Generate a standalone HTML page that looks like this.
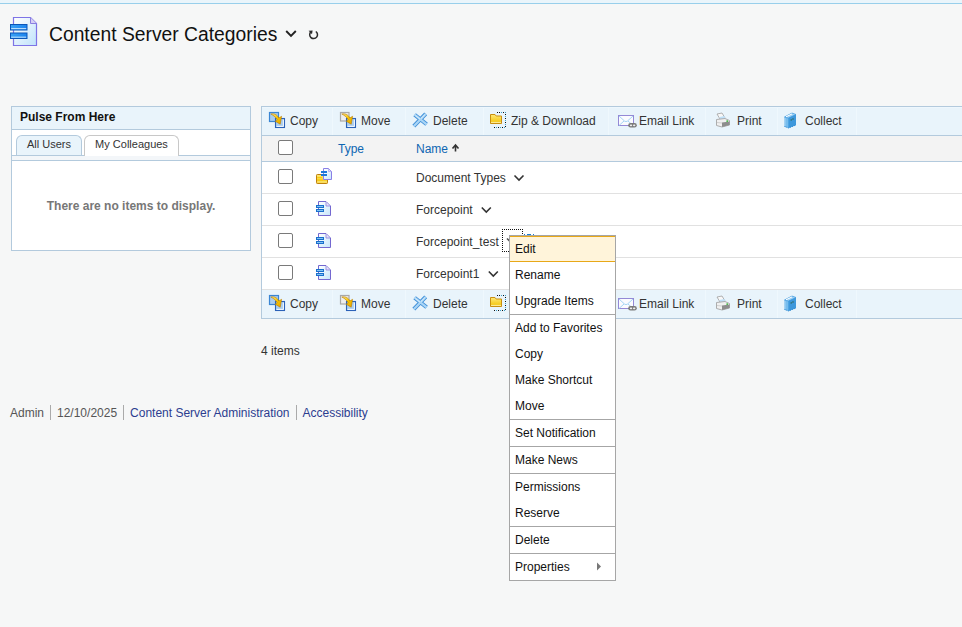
<!DOCTYPE html>
<html><head><meta charset="utf-8">
<style>
*{box-sizing:border-box;margin:0;padding:0}
html,body{width:962px;height:627px;overflow:hidden;background:#f6f7f7;font-family:"Liberation Sans",sans-serif;color:#333;}
.a{position:absolute}
svg{position:absolute;overflow:visible}
#topband{left:0;top:0;width:962px;height:3px;background:#eaf5fb}
#topline{left:0;top:3px;width:962px;height:1px;background:#98cfeb}
#title{left:49px;top:24px;font-size:19.3px;color:#111;white-space:nowrap;line-height:22px}
/* pulse */
#pulse{left:11px;top:106px;width:240px;height:145px;border:1px solid #b3cadd;background:#fff}
#pulsehd{left:0;top:0;width:238px;height:23px;background:#e9f4fb;border-bottom:1px solid #b3cadd}
#pulsehd span{position:absolute;left:8px;top:3px;font-size:12px;font-weight:bold;color:#111}
.tab{position:absolute;top:28px;height:21px;border:1px solid #b3cadd;border-bottom:none;border-radius:6px 6px 0 0;font-size:11px;color:#333;text-align:center;line-height:17px}
#tabstrip{left:0;top:48px;width:238px;height:6px;background:#f3f6f9;border-top:1px solid #b3cadd;border-bottom:1px solid #b3cadd}
#noitems{left:0;top:92px;width:238px;text-align:center;font-size:12px;font-weight:bold;color:#777}
/* table */
.t{font-size:12px;color:#333;white-space:nowrap;line-height:14px}
.hline{height:1px}
.cb{position:absolute;width:15px;height:15px;border:1px solid #7a7a7a;border-radius:2px;background:#fff}
#footer{left:10px;top:405px;font-size:12px;color:#555;white-space:nowrap}
#footer a{color:#2c3d8f;text-decoration:none}
.sep{display:inline-block;width:1px;height:15px;background:#aaa;vertical-align:-3px;margin:0 6px}
/* menu */
#menu{left:509px;top:235px;width:107px;height:346px;background:#fff;border:1px solid #a6a6a6}
.mi{position:absolute;left:5px;font-size:12px;color:#111;white-space:nowrap;line-height:14px}
.ms{position:absolute;left:0;width:105px;height:1px;background:#a6a6a6}
</style></head><body>
<div class="a" id="topband"></div>
<div class="a" id="topline"></div>

<!-- header icon -->
<svg style="left:0;top:0" width="962" height="60">
 <defs>
  <linearGradient id="pg" x1="0" y1="0" x2="1" y2="1"><stop offset="0" stop-color="#ffffff"/><stop offset="1" stop-color="#bfe3fb"/></linearGradient>
  <linearGradient id="bar" x1="0" y1="0" x2="1" y2="0"><stop offset="0" stop-color="#3aa0f5"/><stop offset="1" stop-color="#1a84ee"/></linearGradient>
 </defs>
 <path d="M13.5 17.5 H30.5 L36.5 23.5 V45.5 H13.5 Z" fill="url(#pg)" stroke="#7e74e6" stroke-width="1.2"/>
 <path d="M30.5 17.5 V23.5 H36.5" fill="#d6d0f5" stroke="#8a7fe0" stroke-width="1"/>
 <rect x="10.5" y="24.5" width="16.5" height="5.5" fill="url(#bar)" stroke="#0a56b8" stroke-width="1"/>
 <rect x="11.2" y="28.2" width="15" height="0.9" fill="#d8eeff"/>
 <rect x="10.5" y="33" width="16.5" height="5.5" fill="url(#bar)" stroke="#0a56b8" stroke-width="1"/>
 <rect x="11.2" y="36.7" width="15" height="0.9" fill="#d8eeff"/>
 <path d="M286.2 31 L291 35.8 L295.8 31" fill="none" stroke="#222" stroke-width="1.9"/>
 <path d="M315.8 31.5 A3.9 3.9 0 1 1 310.9 31.9" fill="none" stroke="#2a2a2a" stroke-width="1.5"/>
 <path d="M308.6 30.8 L312.6 30.5 L312 34.2 Z" fill="#2a2a2a"/>
</svg>

<div class="a" id="title">Content Server Categories</div>

<div class="a" id="pulse">
 <div class="a" id="pulsehd"><span>Pulse From Here</span></div>
 <div class="tab" style="left:4px;width:66px;background:#e9f4fb">All Users</div>
 <div class="tab" style="left:72px;width:95px;background:#fff;height:21px;z-index:2;border-color:#c8c8c8">My Colleagues</div>
 <div class="a" id="tabstrip"></div>
 <div class="a" id="noitems">There are no items to display.</div>
</div>

<!-- table -->
<div class="a" style="left:261px;top:106px;width:701px;height:213px;background:#fff;border-left:1px solid #b3cadd"></div>
<div class="a hline" style="left:261px;top:106px;width:701px;background:#b3cadd"></div>
<div class="a" style="left:262px;top:107px;width:700px;height:28px;background:#e9f4fb"></div>
<div class="a hline" style="left:261px;top:135px;width:701px;background:#b3cadd"></div>
<div class="a" style="left:262px;top:136px;width:700px;height:25px;background:#f3f3f3"></div>
<div class="a hline" style="left:261px;top:161px;width:701px;background:#b3cadd"></div>
<div class="a hline" style="left:262px;top:193px;width:700px;background:#e1e1e1"></div>
<div class="a hline" style="left:262px;top:225px;width:700px;background:#e1e1e1"></div>
<div class="a hline" style="left:262px;top:257px;width:700px;background:#e1e1e1"></div>
<div class="a hline" style="left:262px;top:289px;width:700px;background:#e1e1e1"></div>
<div class="a" style="left:262px;top:290px;width:700px;height:28px;background:#e9f4fb"></div>
<div class="a hline" style="left:261px;top:318px;width:701px;background:#b3cadd"></div>

<div class="a" style="left:332px;top:107px;width:1px;height:28px;background:#eff8fd"></div>
<div class="a" style="left:405px;top:107px;width:1px;height:28px;background:#eff8fd"></div>
<div class="a" style="left:483px;top:107px;width:1px;height:28px;background:#eff8fd"></div>
<div class="a" style="left:608px;top:107px;width:1px;height:28px;background:#eff8fd"></div>
<div class="a" style="left:705px;top:107px;width:1px;height:28px;background:#eff8fd"></div>
<div class="a" style="left:777px;top:107px;width:1px;height:28px;background:#eff8fd"></div>
<div class="a" style="left:856px;top:107px;width:1px;height:28px;background:#eff8fd"></div>
<div class="a" style="left:262px;top:107px;width:700px;height:1px;background:#eef7fd"></div>
<div class="a" style="left:332px;top:290px;width:1px;height:28px;background:#eff8fd"></div>
<div class="a" style="left:405px;top:290px;width:1px;height:28px;background:#eff8fd"></div>
<div class="a" style="left:483px;top:290px;width:1px;height:28px;background:#eff8fd"></div>
<div class="a" style="left:608px;top:290px;width:1px;height:28px;background:#eff8fd"></div>
<div class="a" style="left:705px;top:290px;width:1px;height:28px;background:#eff8fd"></div>
<div class="a" style="left:777px;top:290px;width:1px;height:28px;background:#eff8fd"></div>
<div class="a" style="left:856px;top:290px;width:1px;height:28px;background:#eff8fd"></div>
<div class="cb" style="left:278px;top:140px"></div>
<div class="cb" style="left:278px;top:169px"></div>
<div class="cb" style="left:278px;top:201px"></div>
<div class="cb" style="left:278px;top:233px"></div>
<div class="cb" style="left:278px;top:265px"></div>

<div class="a t" style="left:338px;top:142px;color:#0e66b2">Type</div>
<div class="a t" style="left:416px;top:142px;color:#0e66b2">Name</div>
<div class="a t" style="left:416px;top:171px">Document Types</div>
<div class="a t" style="left:416px;top:203px">Forcepoint</div>
<div class="a t" style="left:416px;top:235px">Forcepoint_test</div>
<div class="a t" style="left:416px;top:267px">Forcepoint1</div>


<div class="a t" style="left:290px;top:114px">Copy</div>
<div class="a t" style="left:361px;top:114px">Move</div>
<div class="a t" style="left:433px;top:114px">Delete</div>
<div class="a t" style="left:511px;top:114px">Zip &amp; Download</div>
<div class="a t" style="left:639px;top:114px">Email Link</div>
<div class="a t" style="left:737px;top:114px">Print</div>
<div class="a t" style="left:805px;top:114px">Collect</div>
<div class="a t" style="left:290px;top:297px">Copy</div>
<div class="a t" style="left:361px;top:297px">Move</div>
<div class="a t" style="left:433px;top:297px">Delete</div>
<div class="a t" style="left:511px;top:297px">Zip &amp; Download</div>
<div class="a t" style="left:639px;top:297px">Email Link</div>
<div class="a t" style="left:737px;top:297px">Print</div>
<div class="a t" style="left:805px;top:297px">Collect</div>

<svg style="left:0;top:0" width="962" height="627">
 <defs>
  <linearGradient id="ylw" x1="0" y1="0" x2="1" y2="1"><stop offset="0" stop-color="#ffe98a"/><stop offset="0.5" stop-color="#f6c400"/><stop offset="1" stop-color="#e3a100"/></linearGradient>
  <linearGradient id="fld" x1="0" y1="0" x2="0" y2="1"><stop offset="0" stop-color="#ffe97a"/><stop offset="1" stop-color="#f2c200"/></linearGradient>
  <linearGradient id="xg" x1="0" y1="0" x2="1" y2="1"><stop offset="0" stop-color="#bfe3fa"/><stop offset="1" stop-color="#5aa8e6"/></linearGradient>
  <g id="icopy">
   <rect x="0.5" y="0.5" width="9" height="9" fill="#a9cdef" stroke="#3a85d3" stroke-width="1.2"/>
   <rect x="6.5" y="6.5" width="9" height="9" fill="#a9cdef" stroke="#2b62b8" stroke-width="1.1"/><path d="M7.6 14.4 H14.4 V7.6" fill="none" stroke="#ffffff" stroke-width="0.9"/>
   <path d="M1.8 2 C5.5 1.2 8.5 3 9.8 6 L12.6 4.3 L11.2 12.2 L6.2 9.2 L8.2 7.9 C7 5.5 5 3.6 1.8 2 Z" fill="url(#ylw)" stroke="#b87a00" stroke-width="0.6"/>
  </g>
  <g id="imove">
   <rect x="0.5" y="0.5" width="8.5" height="8.5" fill="#eeeeee" stroke="#a8a8a8" stroke-width="1.2"/>
   <rect x="6.5" y="6.5" width="9" height="9" fill="#a9cdef" stroke="#2b62b8" stroke-width="1.1"/><path d="M7.6 14.4 H14.4 V7.6" fill="none" stroke="#ffffff" stroke-width="0.9"/>
   <path d="M1.8 2 C5.5 1.2 8.5 3 9.8 6 L12.6 4.3 L11.2 12.2 L6.2 9.2 L8.2 7.9 C7 5.5 5 3.6 1.8 2 Z" fill="url(#ylw)" stroke="#b87a00" stroke-width="0.6"/>
  </g>
  <g id="idel">
   <path d="M2.6 1.7 L14.6 11.3 M13.7 0.9 L1.8 13.2" stroke="#3f8fd8" stroke-width="4" stroke-linecap="butt"/>
   <path d="M2.6 1.7 L14.6 11.3 M13.7 0.9 L1.8 13.2" stroke="#a9d5f6" stroke-width="2.2" stroke-linecap="butt"/>
   <path d="M3.5 2.6 L8 6.1 M12.8 1.8 L9 5.5" stroke="#e4f4fd" stroke-width="0.8"/>
  </g>
  <g id="izip">
   <path d="M7 0.5 H15.5 V15.5 H4" fill="none" stroke="#111" stroke-width="1" stroke-dasharray="1 1" shape-rendering="crispEdges"/>
   <path d="M8 0.5 H15.5 V15.5 H5" fill="none" stroke="#3aa0c8" stroke-width="1" stroke-dasharray="1 3" stroke-dashoffset="1" shape-rendering="crispEdges"/>
   <path d="M0.5 2.5 H5 L6.2 4 H11.5 V11.5 H0.5 Z" fill="url(#fld)" stroke="#c98f10" stroke-width="1"/>
   <path d="M1 10.4 H11" stroke="#fff7cc" stroke-width="0.8"/>
  </g>
  <g id="imail">
   <rect x="0.5" y="0.5" width="15" height="10" fill="#fbfbff" stroke="#9489d6" stroke-width="1"/>
   <path d="M1 1 L6.5 6 Q8 7.3 9.5 6 L15 1 M1 10.5 L6 6 M15 10.5 L10 6" fill="none" stroke="#9bd0f3" stroke-width="0.9"/>
   <rect x="10.2" y="8" width="8.6" height="4.6" rx="2.3" fill="#7a7a7a"/>
   <rect x="11.8" y="9.4" width="2.4" height="1.8" rx="0.9" fill="#eee"/>
   <rect x="15" y="9.4" width="2.4" height="1.8" rx="0.9" fill="#eee"/>
  </g>
  <g id="iprint">
   <path d="M1 1.5 L6 0.5 L9 5.5 L4 6.5 Z" fill="#f8f8f8" stroke="#a0a0a0" stroke-width="0.8"/>
   <path d="M3.5 4.5 L8.5 3.5 L9.5 6.5 L4.5 7.5 Z" fill="#bfe0f8"/>
   <path d="M0.5 7 L9 6 L13.5 8 V12.5 L6 14.5 L0.5 13 Z" fill="#f0f0f0" stroke="#a5a5a5" stroke-width="0.9"/>
   <path d="M6 10 L13.5 9 V12.5 L6 14.5 Z" fill="#8d8d8d"/>
   <path d="M1 10 L6 10.5" stroke="#c8c8c8" stroke-width="0.8"/>
   <circle cx="11.2" cy="8.6" r="0.9" fill="#35b435"/>
  </g>
  <g id="icoll">
   <path d="M0.5 4.5 L8 0.5 L12 2 V12.5 L4.5 15.5 L0.5 14 Z" fill="#62b2ea"/>
   <path d="M0.5 4.5 L8 0.5 L12 2 L4.5 5.5 Z" fill="#9fd2f5" stroke="#4a9fe0" stroke-width="0.7"/>
   <path d="M2 4.3 L8 1.4" stroke="#ffffff" stroke-width="1"/>
   <path d="M4.5 5.5 V15.5 L12 12.5 V2 Z" fill="#3d98dc"/>
   <path d="M1.5 5.5 V13.5 M3 5.8 V14.3" stroke="#9fd0f4" stroke-width="0.7"/>
   <path d="M0.5 14 L4.5 15.5 L12 12.5" fill="none" stroke="#2a86d0" stroke-width="1" stroke-dasharray="1 1"/>
   <circle cx="7.2" cy="7.4" r="0.7" fill="#2a5a3a"/><circle cx="9" cy="6.5" r="0.7" fill="#2a5a3a"/>
  </g>
  <linearGradient id="pg2" x1="0" y1="0" x2="1" y2="1"><stop offset="0" stop-color="#ffffff"/><stop offset="1" stop-color="#c6e6fb"/></linearGradient>

 <g id="idoc">
  <path d="M2.5 0.5 H10 L14.5 5 V14.5 H2.5 Z" fill="url(#pg2)" stroke="#7468d0" stroke-width="1"/>
  <path d="M10 1 V5 H14" fill="#e4e0fa" stroke="#8a80dc" stroke-width="0.8"/>
  <rect x="0" y="4" width="8" height="3" fill="#1a6fcc"/>
  <rect x="0" y="8" width="8" height="3" fill="#1a6fcc"/>
  <rect x="1" y="5" width="6" height="1" fill="#7fc2f5"/><rect x="1" y="9" width="6" height="1" fill="#7fc2f5"/>
 </g>
 <g id="ifd">
  <rect x="0.5" y="7.5" width="11" height="9" rx="0.8" fill="url(#fld)" stroke="#c0800c" stroke-width="1"/>
  <path d="M1.2 15 H11" stroke="#fff6c0" stroke-width="0.9"/>
  <path d="M1.2 10.5 H6 M1.2 13 H7" stroke="#f7c800" stroke-width="0.8"/>
  <path d="M7.5 1.5 H12.5 L15.5 4.5 V12.5 H7.5 Z" fill="url(#pg2)" stroke="#8a7fe6" stroke-width="1"/>
  <path d="M12.5 1.8 V4.5 H15.2" fill="#ddd8f8" stroke="#a59cf0" stroke-width="0.7"/>
  <rect x="5" y="4" width="6" height="2" fill="#1a78d8"/>
  <rect x="5" y="7" width="6" height="2" fill="#1a78d8"/>
 </g>
 </defs>
 <g id="tb1">
  <use href="#icopy" x="269" y="112"/>
  <use href="#imove" x="340" y="112"/>
  <use href="#idel" x="412" y="113"/>
  <use href="#izip" x="490" y="112"/>
  <use href="#imail" x="618" y="115"/>
  <use href="#iprint" x="716" y="112.5"/>
  <use href="#icoll" x="784" y="112.5"/>
 </g>
 <use href="#tb1" x="0" y="183"/>

 <use href="#ifd" x="316" y="167"/>
 <use href="#idoc" x="316" y="201"/>
 <use href="#idoc" x="316" y="233"/>
 <use href="#idoc" x="316" y="265"/>
 <!-- chevrons -->
 <path d="M514.5 175.5 L519 180 L523.5 175.5" fill="none" stroke="#333" stroke-width="1.6"/>
 <path d="M481.8 207.5 L486.3 212 L490.8 207.5" fill="none" stroke="#333" stroke-width="1.6"/>
 <path d="M488.8 271.5 L493.3 276 L497.8 271.5" fill="none" stroke="#333" stroke-width="1.6"/>
 <path d="M507 238.5 L509.5 241" fill="none" stroke="#555" stroke-width="1.6"/>
 <!-- sort arrow -->
 <path d="M455.5 151.5 V145.5 M452.5 148.5 L455.5 145 L458.5 148.5" fill="none" stroke="#333" stroke-width="1.6"/>
 <!-- focus box -->
 <rect x="524" y="234" width="1" height="1" fill="#1a7fd0"/><rect x="527" y="234" width="4" height="1" fill="#1a7fd0"/><rect x="533" y="234" width="1" height="1" fill="#1a7fd0"/>
</svg>
<div class="a" style="left:502px;top:229px;width:21px;height:23px;border:1px dotted #111"></div>
<div class="a t" style="left:261px;top:344px">4 items</div>
<div class="a" id="footer">Admin<span class="sep"></span>12/10/2025<span class="sep"></span><a>Content Server Administration</a><span class="sep"></span><a>Accessibility</a></div>

<div class="a" id="menu">
 <div class="a" style="left:0;top:0;width:105px;height:26px;background:#fff4da;border-top:1px solid #e8a818;border-bottom:1px solid #e8a818"></div>
 <div class="mi" style="top:6px">Edit</div>
 <div class="mi" style="top:32px">Rename</div>
 <div class="mi" style="top:58px">Upgrade Items</div>
 <div class="ms" style="top:78px"></div>
 <div class="mi" style="top:85px">Add to Favorites</div>
 <div class="mi" style="top:111px">Copy</div>
 <div class="mi" style="top:137px">Make Shortcut</div>
 <div class="mi" style="top:163px">Move</div>
 <div class="ms" style="top:183px"></div>
 <div class="mi" style="top:190px">Set Notification</div>
 <div class="ms" style="top:210px"></div>
 <div class="mi" style="top:217px">Make News</div>
 <div class="ms" style="top:237px"></div>
 <div class="mi" style="top:244px">Permissions</div>
 <div class="mi" style="top:270px">Reserve</div>
 <div class="ms" style="top:290px"></div>
 <div class="mi" style="top:297px">Delete</div>
 <div class="ms" style="top:317px"></div>
 <div class="mi" style="top:324px">Properties</div>
</div>
<svg style="left:0;top:0" width="962" height="627"><path d="M597 562.5 L601 566.5 L597 570.5 Z" fill="#777"/></svg>
</body></html>
